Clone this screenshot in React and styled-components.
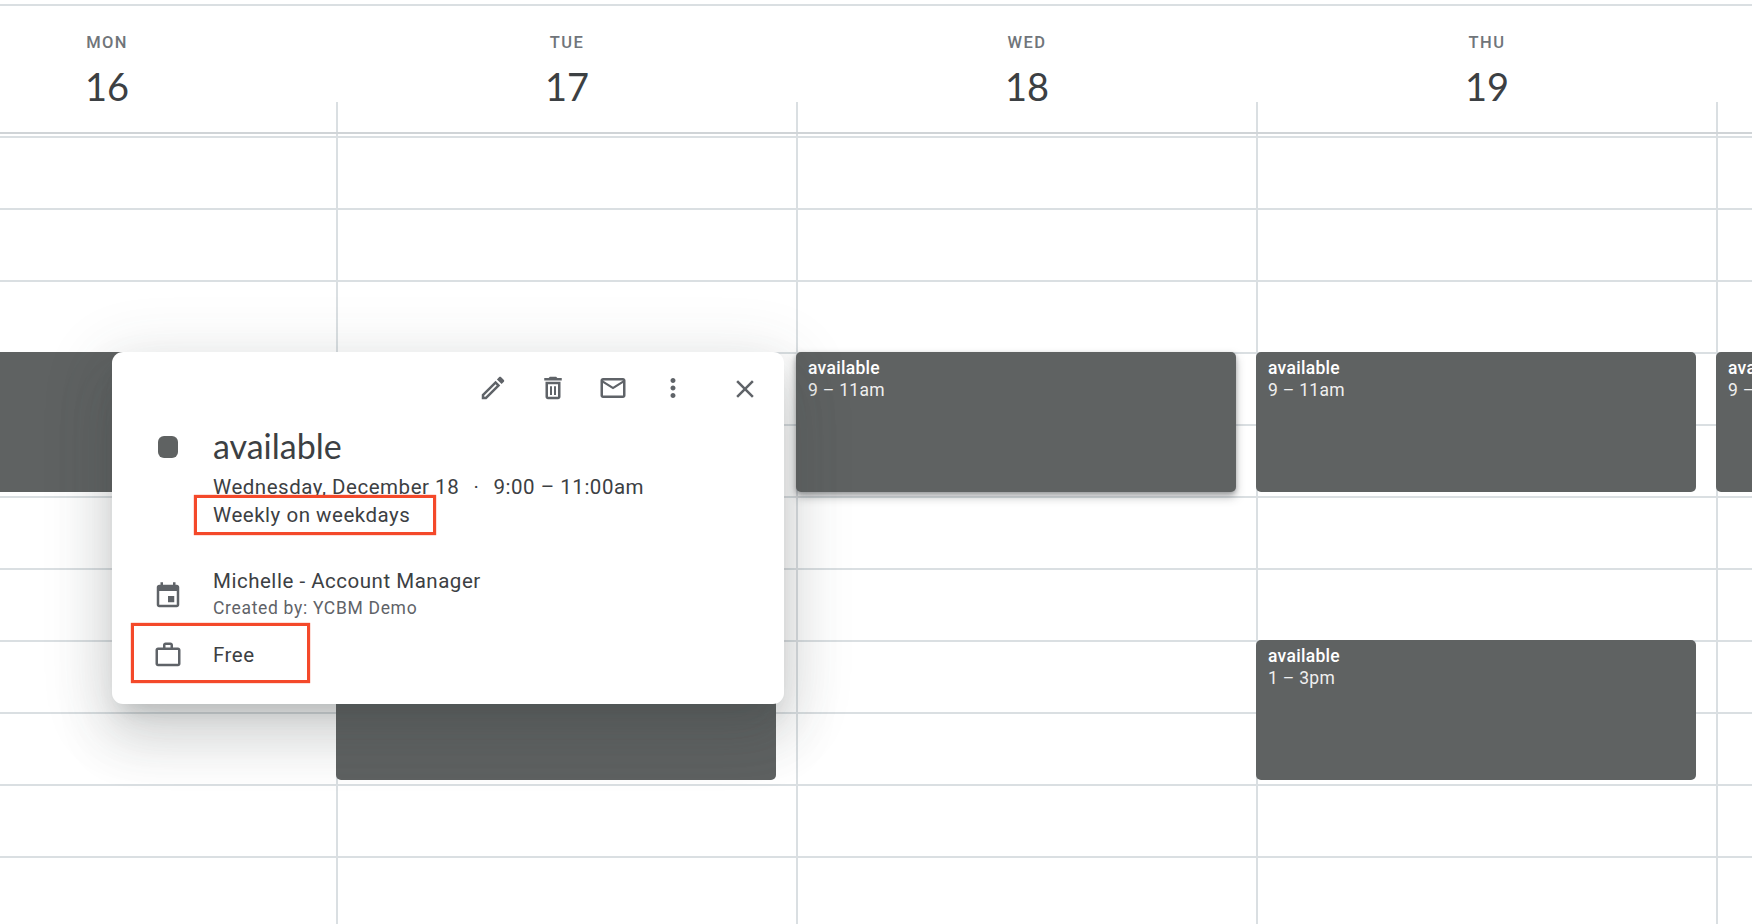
import React from "react";
import styled, { createGlobalStyle } from "styled-components";

const GlobalStyle = createGlobalStyle`
  html, body {
    margin: 0;
    padding: 0;
    background: #fff;
    font-family: Roboto, "Liberation Sans", sans-serif;
  }
`;

const LINE = "#dadfe2";
const MARK = "#f4492a";

const Page = styled.div`
  position: relative;
  width: 1752px;
  height: 924px;
  overflow: hidden;
  background: #fff;
`;

const TopRule = styled.div`
  height: 2px;
  margin-top: 4px;
  background: ${LINE};
`;

const Week = styled.div`
  display: grid;
  grid-template-columns: repeat(5, 460px);
  margin-left: -124px;
`;

const Column = styled.div`
  display: flex;
  flex-direction: column;
  min-width: 0;
`;

const DayHead = styled.div`
  display: flex;
  flex-direction: column;
  align-items: center;
  height: 126px;
  border-bottom: 2px solid #d0d4d7;
`;

const DayName = styled.div`
  margin: 27px 0 0 2px;
  font-size: 16.5px;
  line-height: 20px;
  font-weight: 500;
  letter-spacing: 1.4px;
  color: #70757a;
`;

const DayNumber = styled.div`
  margin: 11px 0 -6px 2px;
  font-family: Lato, "Noto Sans", sans-serif;
  font-size: 38px;
  line-height: 44px;
  color: #3c4043;
`;

const Tick = styled.div`
  flex: none;
  align-self: flex-start;
  width: 2px;
  height: 30px;
  margin-top: auto;
  background: ${LINE};
`;

const Slots = styled.div`
  position: relative;
  height: 790px;
  border-left: 2px solid ${LINE};
  background-image: linear-gradient(${LINE} 2px, transparent 2px);
  background-size: 100% 72px;
  background-position: 0 2px;
`;

const Event = styled.div`
  position: absolute;
  left: -2px;
  top: ${(p) => p.$top}px;
  width: 440px;
  height: 140px;
  box-sizing: border-box;
  padding: 5px 12px;
  border-radius: 5px;
  background: #5f6262;
  color: #fff;
  font-size: 17.5px;
  line-height: 22px;
  letter-spacing: 0.3px;
  box-shadow: ${(p) =>
    p.$raised ? "0 5px 10px rgba(60, 64, 67, 0.35), 0 2px 4px rgba(60, 64, 67, 0.3)" : "none"};
`;

const EventTitle = styled.div`
  font-weight: 500;
`;

const EventTime = styled.div`
  opacity: 0.9;
`;

const Popup = styled.div`
  position: absolute;
  left: 112px;
  top: 352px;
  width: 672px;
  height: 352px;
  box-sizing: border-box;
  padding: 5px 9px 0 41px;
  border-radius: 11px;
  background: #fff;
  color: #3c4043;
  box-shadow: 0 34px 53px 4px rgba(60, 64, 67, 0.14), 0 13px 64px 11px rgba(60, 64, 67, 0.12),
    0 15px 21px -10px rgba(60, 64, 67, 0.2);
`;

const Toolbar = styled.div`
  display: flex;
  justify-content: flex-end;
`;

const IconButton = styled.div`
  display: flex;
  align-items: center;
  justify-content: center;
  width: 60px;
  height: 60px;
  box-sizing: border-box;
  margin-left: ${(p) => (p.$apart ? 12 : 0)}px;
  padding-top: ${(p) => (p.$apart ? 3 : 1)}px;
  color: #5f6368;
`;

const Row = styled.div`
  display: grid;
  grid-template-columns: 60px 1fr;
  align-items: start;
`;

const Swatch = styled.div`
  width: 20px;
  height: 22px;
  margin: 19px 0 0 5px;
  border-radius: 6px;
  background: #5f6262;
`;

const Title = styled.div`
  margin-top: 9px;
  font-family: Lato, "Noto Sans", sans-serif;
  font-size: 34px;
  line-height: 40px;
`;

const DateLine = styled.div`
  margin-top: 7px;
  font-size: 20.5px;
  line-height: 28px;
  letter-spacing: 0.52px;
  white-space: pre;
`;

const Separator = styled.span`
  padding: 0 3px;
`;

const Recurrence = styled.div`
  position: relative;
  width: fit-content;
  box-sizing: border-box;
  height: 40px;
  margin: -6px 0 0 -19px;
  padding: 0 23px 0 16px;
  border: 3px solid ${MARK};
  box-shadow: 0 0 1px ${MARK};
  background: #fff;
  font-size: 20.5px;
  line-height: 34px;
  letter-spacing: 0.52px;
`;

const Calendar = styled.div`
  margin-top: 34px;
`;

const CalendarName = styled.div`
  font-size: 20.5px;
  line-height: 24px;
  letter-spacing: 0.52px;
`;

const Creator = styled.div`
  margin-top: 4px;
  font-size: 17.5px;
  line-height: 22px;
  letter-spacing: 0.68px;
  color: #5f6368;
`;

const Status = styled.div`
  display: flex;
  align-items: center;
  width: 179px;
  height: 60px;
  box-sizing: border-box;
  margin: 4px 0 0 -22px;
  padding: 3px 0 0 19px;
  border: 3px solid ${MARK};
  box-shadow: 0 0 1px ${MARK};
  font-size: 20.5px;
  letter-spacing: 0.52px;
`;

const StatusLabel = styled.span`
  margin-left: 30px;
`;

const RowIcon = styled.div`
  display: flex;
  margin-top: 46px;
  color: #5f6368;
`;

const StatusIcon = styled.div`
  display: flex;
  color: #5f6368;
`;

const Icon = ({ d }) => (
  <svg width="30" height="30" viewBox="0 0 24 24" fill="currentColor">
    <path d={d} />
  </svg>
);

const icons = {
  edit: "M14.06 9.02l.92.92L5.92 19H5v-.92l9.06-9.06M17.66 3c-.25 0-.51.1-.7.29l-1.83 1.83 3.75 3.75 1.83-1.83c.39-.39.39-1.02 0-1.41l-2.34-2.34c-.2-.2-.45-.29-.71-.29zm-3.6 3.19L3 17.25V21h3.75L17.81 9.94l-3.75-3.75z",
  trash: "M16 9v10H8V9h8m-1.5-6h-5l-1 1H5v2h14V4h-3.5l-1-1zM18 7H6v12c0 1.1.9 2 2 2h8c1.1 0 2-.9 2-2V7zM9.6 10.5h1.6v7H9.6zM12.8 10.5h1.6v7h-1.6z",
  mail: "M22 6c0-1.1-.9-2-2-2H4c-1.1 0-2 .9-2 2v12c0 1.1.9 2 2 2h16c1.1 0 2-.9 2-2V6zm-2 0l-8 5-8-5h16zm0 12H4V8l8 5 8-5v10z",
  more: "M12 8c1.1 0 2-.9 2-2s-.9-2-2-2-2 .9-2 2 .9 2 2 2zm0 2c-1.1 0-2 .9-2 2s.9 2 2 2 2-.9 2-2-.9-2-2-2zm0 6c-1.1 0-2 .9-2 2s.9 2 2 2 2-.9 2-2-.9-2-2-2z",
  close: "M19 6.41L17.59 5 12 10.59 6.41 5 5 6.41 10.59 12 5 17.59 6.41 19 12 13.41 17.59 19 19 17.59 13.41 12z",
  calendar: "M17 12h-5v5h5v-5zM16 1v2H8V1H6v2H5c-1.11 0-1.99.9-1.99 2L3 19c0 1.1.89 2 2 2h14c1.1 0 2-.9 2-2V5c0-1.1-.9-2-2-2h-1V1h-2zm3 18H5V8h14v11z",
  briefcase: "M14 6V4h-4v2h4zM4 8v11h16V8H4zm16-2c1.11 0 2 .89 2 2v11c0 1.11-.89 2-2 2H4c-1.11 0-2-.89-2-2l.01-11c0-1.11.88-2 1.99-2h4V4c0-1.11.89-2 2-2h4c1.11 0 2 .89 2 2v2h4z",
};

const MORNING = 218;
const AFTERNOON = 506;

const days = [
  { name: "MON", date: 16, events: [{ top: MORNING, time: "9 – 11am" }] },
  { name: "TUE", date: 17, events: [{ top: AFTERNOON, time: "1 – 3pm" }] },
  { name: "WED", date: 18, events: [{ top: MORNING, time: "9 – 11am", raised: true }] },
  {
    name: "THU",
    date: 19,
    events: [
      { top: MORNING, time: "9 – 11am" },
      { top: AFTERNOON, time: "1 – 3pm" },
    ],
  },
  { name: "FRI", date: 20, events: [{ top: MORNING, time: "9 – 11am" }] },
];

const App = () => {
  return (
    <Page>
      <GlobalStyle />
      <TopRule />
      <Week>
        {days.map((day) => (
          <Column key={day.name}>
            <DayHead>
              <DayName>{day.name}</DayName>
              <DayNumber>{day.date}</DayNumber>
              {day.date > 16 && <Tick />}
            </DayHead>
            <Slots>
              {day.events.map((ev) => (
                <Event key={ev.top} $top={ev.top} $raised={ev.raised}>
                  <EventTitle>available</EventTitle>
                  <EventTime>{ev.time}</EventTime>
                </Event>
              ))}
            </Slots>
          </Column>
        ))}
      </Week>

      <Popup>
        <Toolbar>
          <IconButton><Icon d={icons.edit} /></IconButton>
          <IconButton><Icon d={icons.trash} /></IconButton>
          <IconButton><Icon d={icons.mail} /></IconButton>
          <IconButton><Icon d={icons.more} /></IconButton>
          <IconButton $apart><Icon d={icons.close} /></IconButton>
        </Toolbar>
        <Row>
          <Swatch />
          <Title>available</Title>
        </Row>
        <Row>
          <span />
          <div>
            <DateLine>
              Wednesday, December 18  <Separator>·</Separator>  9:00 – 11:00am
            </DateLine>
            <Recurrence>Weekly on weekdays</Recurrence>
          </div>
        </Row>
        <Row>
          <RowIcon><Icon d={icons.calendar} /></RowIcon>
          <Calendar>
            <CalendarName>Michelle - Account Manager</CalendarName>
            <Creator>Created by: YCBM Demo</Creator>
          </Calendar>
        </Row>
        <Status>
          <StatusIcon><Icon d={icons.briefcase} /></StatusIcon>
          <StatusLabel>Free</StatusLabel>
        </Status>
      </Popup>
    </Page>
  );
};

export default App;
